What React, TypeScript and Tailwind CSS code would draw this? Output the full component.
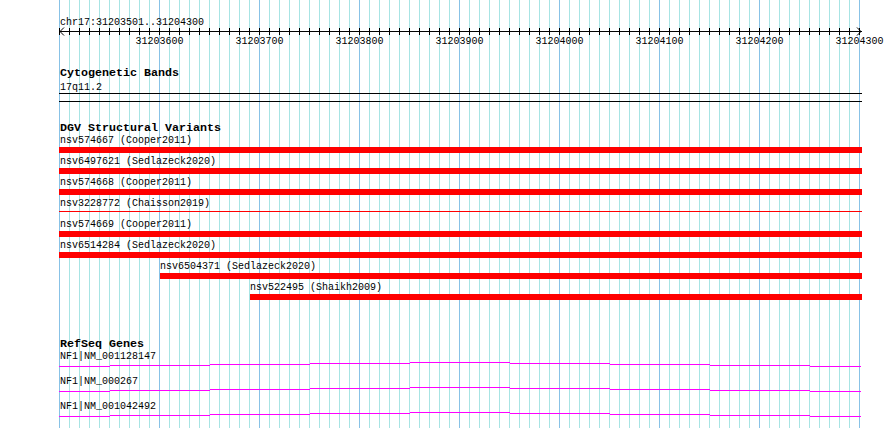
const MINOR = "#a8e4e4";
const MAJOR = "#88c2e6";

const variants = [
  { label: "nsv574667 (Cooper2011)", start: 59, text: 60 },
  { label: "nsv6497621 (Sedlazeck2020)", start: 59, text: 60 },
  { label: "nsv574668 (Cooper2011)", start: 59, text: 60 },
  { label: "nsv3228772 (Chaisson2019)", start: 59, text: 60, thin: true },
  { label: "nsv574669 (Cooper2011)", start: 59, text: 60 },
  { label: "nsv6514284 (Sedlazeck2020)", start: 59, text: 60 },
  { label: "nsv6504371 (Sedlazeck2020)", start: 160, text: 160 },
  { label: "nsv522495 (Shaikh2009)", start: 250, text: 250 },
];

const genes = ["NF1|NM_001128147", "NF1|NM_000267", "NF1|NM_001042492"];

// intron connector steps: [x1, x2, rise]
const steps: [number, number, number][] = [
  [59, 110, 0],
  [110, 210, 1],
  [210, 310, 2],
  [310, 410, 3],
  [410, 510, 4],
  [510, 610, 3],
  [610, 710, 2],
  [710, 810, 1],
  [810, 861, 0],
];

function Grid() {
  return (
    <svg className="absolute inset-0" width={890} height={428} shapeRendering="crispEdges">
      {Array.from({ length: 81 }).map((_, k) => (
        <line
          key={k}
          x1={59.5 + k * 10}
          x2={59.5 + k * 10}
          y1={0}
          y2={428}
          stroke={k % 10 === 0 ? MAJOR : MINOR}
          strokeWidth={1}
        />
      ))}
    </svg>
  );
}

function Ruler() {
  return (
    <svg width={890} height={50} className="block" shapeRendering="crispEdges">
      <text x={60} y={25} fontSize={10} fontFamily="'Liberation Mono', monospace" fill="#000">
        chr17:31203501..31204300
      </text>
      <line x1={60} x2={862} y1={31.5} y2={31.5} stroke="#000" />
      {Array.from({ length: 81 }).map((_, k) => (
        <line key={k} x1={59.5 + k * 10} x2={59.5 + k * 10} y1={28} y2={35} stroke="#000" />
      ))}
      <path d="M60 31.5 L64 27.5 M60 31.5 L64 35.5" stroke="#000" shapeRendering="auto" />
      <path d="M861 31.5 L857 27.5 M861 31.5 L857 35.5" stroke="#000" shapeRendering="auto" />
      {Array.from({ length: 8 }).map((_, i) => (
        <text
          key={i}
          x={159.5 + i * 100}
          y={44}
          fontSize={10}
          textAnchor="middle"
          fontFamily="'Liberation Mono', monospace"
          fill="#000"
        >
          {31203600 + i * 100}
        </text>
      ))}
    </svg>
  );
}

function TrackTitle({ children, className = "" }: { children: string; className?: string }) {
  return (
    <div className={`pl-[60px] h-[13px] leading-[13px] text-[11.67px] font-bold text-black whitespace-nowrap ${className}`}>
      {children}
    </div>
  );
}

export default function App() {
  return (
    <div className="relative w-[890px] h-[428px] overflow-hidden bg-white font-['Liberation_Mono',monospace] text-black">
      <Grid />
      <div className="relative">
        <Ruler />

        {/* Cytogenetic bands */}
        <TrackTitle className="mt-[17px]">Cytogenetic Bands</TrackTitle>
        <div className="mt-[2px] pl-[60px] h-[11px] leading-[12px] text-[10px]">17q11.2</div>
        <div className="ml-[59px] w-[803px] h-[1px] bg-black" />
        <div className="ml-[59px] mt-[7px] w-[803px] h-[1px] bg-black" />

        {/* DGV */}
        <TrackTitle className="mt-[20px]">DGV Structural Variants</TrackTitle>
        <div className="flex flex-col">
          {variants.map((v) => (
            <div key={v.label} className="h-[21px]">
              <div
                className="h-[12px] leading-[12px] text-[10px] whitespace-nowrap"
                style={{ paddingLeft: v.text }}
              >
                {v.label}
              </div>
              <div className="h-[6px]" style={{ marginLeft: v.start, width: 862 - v.start }}>
                {v.thin ? (
                  <div className="mt-[1px] h-[1px] bg-[#ff0000]" />
                ) : (
                  <div className="h-[6px] bg-[#ff0000]" />
                )}
              </div>
            </div>
          ))}
        </div>

        {/* RefSeq */}
        <TrackTitle className="mt-[35px]">RefSeq Genes</TrackTitle>
        <div className="flex flex-col">
          {genes.map((g) => (
            <div key={g} className="h-[25px]">
              <div className="pl-[60px] h-[8px] leading-[12px] text-[10px] whitespace-nowrap">{g}</div>
              <svg width={890} height={17} className="block" shapeRendering="crispEdges">
                {steps.map(([x1, x2, r]) => (
                  <line key={x1} x1={x1} x2={x2} y1={7.5 - r} y2={7.5 - r} stroke="#ff00ff" />
                ))}
              </svg>
            </div>
          ))}
        </div>
      </div>
    </div>
  );
}
